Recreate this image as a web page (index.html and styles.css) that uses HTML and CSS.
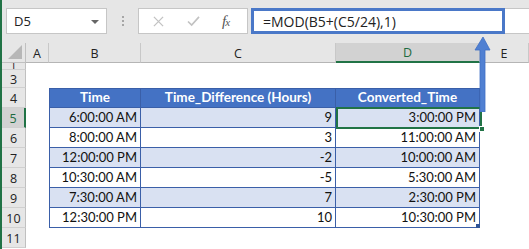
FILE: index.html
```html
<!DOCTYPE html>
<html lang="en">
<head>
  <meta charset="UTF-8">
  <title>MOD time conversion</title>
  <link rel="stylesheet" href="styles.css">
</head>
<body>
  <div class="app">
    <!-- formula bar -->
    <div class="formula-row">
      <div class="name-box">
        <span>D5</span>
        <span class="caret"></span>
      </div>
      <div class="grip"><i></i><i></i><i></i></div>
      <div class="fx-box">
        <svg class="ico" viewBox="0 0 12 12"><path d="M1 1L11 11M11 1L1 11" stroke="#c2c2c2" stroke-width="1.4" fill="none"/></svg>
        <svg class="ico" viewBox="0 0 14 12"><path d="M1 6L5 10L13 1" stroke="#c2c2c2" stroke-width="1.8" fill="none"/></svg>
        <span class="fx">f<small>x</small></span>
      </div>
      <div class="formula-input">=MOD(B5+(C5/24),1)</div>
    </div>

    <!-- grid -->
    <div class="sheet">
      <div class="hd corner"><span class="tri"></span></div>
      <div class="hd col">A</div>
      <div class="hd col">B</div>
      <div class="hd col">C</div>
      <div class="hd col active">D</div>
      <div class="hd col">E</div>

      <div class="hd row r-tiny"><span>1</span></div>
      <div class="blank span5"></div>

      <div class="hd row r-short"><span>3</span></div>
      <div class="blank span5"></div>

      <div class="hd row">4</div>
      <div class="blank"></div>
      <div class="cell th first top">Time</div>
      <div class="cell th top">Time_Difference (Hours)</div>
      <div class="cell th top">Converted_Time</div>
      <div class="blank"></div>

      <div class="hd row active">5</div>
      <div class="blank"></div>
      <div class="cell band first">6:00:00 AM</div>
      <div class="cell band">9</div>
      <div class="cell band">3:00:00 PM</div>
      <div class="blank"></div>

      <div class="hd row">6</div>
      <div class="blank"></div>
      <div class="cell first">8:00:00 AM</div>
      <div class="cell">3</div>
      <div class="cell">11:00:00 AM</div>
      <div class="blank"></div>

      <div class="hd row">7</div>
      <div class="blank"></div>
      <div class="cell band first">12:00:00 PM</div>
      <div class="cell band">-2</div>
      <div class="cell band">10:00:00 AM</div>
      <div class="blank"></div>

      <div class="hd row">8</div>
      <div class="blank"></div>
      <div class="cell first">10:30:00 AM</div>
      <div class="cell">-5</div>
      <div class="cell">5:30:00 AM</div>
      <div class="blank"></div>

      <div class="hd row">9</div>
      <div class="blank"></div>
      <div class="cell band first">7:30:00 AM</div>
      <div class="cell band">7</div>
      <div class="cell band">2:30:00 PM</div>
      <div class="blank"></div>

      <div class="hd row">10</div>
      <div class="blank"></div>
      <div class="cell first">12:30:00 PM</div>
      <div class="cell">10</div>
      <div class="cell last">10:30:00 PM<span class="resize"></span></div>
      <div class="blank"></div>

      <div class="hd row">11</div>
      <div class="blank span5"></div>
    </div>

    <!-- overlays -->
    <div class="callout"></div>
    <div class="selection"><span class="handle"></span></div>
    <svg class="arrow" viewBox="0 0 18 76">
      <path d="M9 1L16 14H11V76H6V14H1Z" fill="#5080d2" stroke="#3f6fc4" stroke-width="0.8"/>
    </svg>
  </div>
</body>
</html>
```

FILE: styles.css
```css
* {
  margin: 0;
  padding: 0;
  box-sizing: border-box;
}

body {
  width: 529px;
  height: 249px;
  overflow: hidden;
  background: #fff;
  font-family: "Open Sans", "Noto Sans", sans-serif;
  color: #222;
}

.app {
  position: relative;
  height: 249px;
  border-left: 2px solid #217346;
}

/* formula bar */

.formula-row {
  display: flex;
  align-items: stretch;
  height: 43px;
  padding: 8px 0 9px 4px;
  background: #e6e6e6;
}

.name-box {
  width: 101px;
  display: flex;
  align-items: center;
  justify-content: space-between;
  padding: 0 7px 0 7px;
  background: #fff;
  border: 1px solid #c6c6c6;
  font-size: 13px;
  color: #222;
}

.caret {
  width: 0;
  height: 0;
  border-left: 4px solid transparent;
  border-right: 4px solid transparent;
  border-top: 4px solid #666;
  margin-top: 1px;
}

.grip {
  width: 31px;
  display: flex;
  flex-direction: column;
  align-items: center;
  justify-content: center;
  gap: 2px;
}

.grip i {
  width: 2px;
  height: 2px;
  background: #a6a6a6;
}

.fx-box {
  width: 110px;
  display: flex;
  align-items: center;
  padding: 0 0 0 14px;
  background: #fff;
  border: 1px solid #c6c6c6;
}

.ico {
  width: 11px;
  height: 11px;
  margin-right: 23px;
}

.ico + .ico {
  width: 13px;
  margin-right: 22px;
}

.fx {
  font-family: "Liberation Serif", serif;
  font-style: italic;
  font-size: 15px;
  color: #555;
  letter-spacing: -1px;
}

.fx small {
  font-size: 11px;
}

.formula-input {
  flex: 1;
  margin-left: 3px;
  display: flex;
  align-items: center;
  padding-left: 11px;
  background: #fff;
  border: 1px solid #c6c6c6;
  border-right: none;
  font-size: 14px;
  color: #222;
  white-space: nowrap;
}

/* sheet */

.sheet {
  display: grid;
  grid-template-columns: 24px 23px 92px 195px 144px 1fr;
  grid-template-rows: 20px 7px 18px repeat(8, 20px);
}

.hd {
  background: #e6e6e6;
  border-right: 1px solid #c0c0c0;
  border-bottom: 1px solid #c0c0c0;
  display: flex;
  align-items: center;
  justify-content: center;
  font-size: 12.5px;
  color: #222;
  overflow: hidden;
}

.hd.col {
  border-right-color: #c8c8c8;
  border-bottom-color: #b5b5b5;
  padding-top: 1px;
}

.hd.col.active {
  background: #d2d2d2;
  border-bottom: 2px solid #217346;
  color: #1d6b40;
}

.corner {
  position: relative;
  background: #e6e6e6;
}

.tri {
  position: absolute;
  right: 3px;
  bottom: 3px;
  width: 0;
  height: 0;
  border-left: 14px solid transparent;
  border-bottom: 14px solid #b7b7b7;
}

.hd.row {
  background: #e6e6e6;
  border-bottom-color: #d0d0d0;
  padding-top: 1px;
}

.hd.row.active {
  background: #d2d2d2;
  border-right: 2px solid #217346;
  color: #1d6b40;
}

.r-tiny {
  align-items: flex-end;
}

.r-tiny span {
  font-size: 11px;
  line-height: 9px;
}

.r-short {
  align-items: flex-end;
}

.r-short span {
  line-height: 14px;
}

.blank {
  background: #fff;
}

.span5 {
  grid-column: span 5;
}

.cell {
  display: flex;
  align-items: flex-end;
  justify-content: flex-end;
  padding: 0 3px 2px 0;
  font-family: "Lato", sans-serif;
  font-size: 13px;
  color: #111;
  background: #fff;
  border-right: 1px solid #3a5fa8;
  border-bottom: 1px solid #3a5fa8;
  white-space: nowrap;
  position: relative;
}

.cell.first {
  border-left: 1px solid #3a5fa8;
}

.cell.top {
  border-top: 1px solid #3a5fa8;
}

.cell.band {
  background: #d9e1f2;
}

.cell.th {
  background: #4472c4;
  color: #fff;
  font-weight: 700;
  font-size: 13.5px;
  justify-content: center;
  padding-right: 0;
}

.resize {
  position: absolute;
  right: -1px;
  bottom: -1px;
  width: 4px;
  height: 4px;
  background: #2f5597;
}

/* overlays */

.callout {
  position: absolute;
  left: 249px;
  top: 8px;
  width: 254px;
  height: 26px;
  border: 3px solid #4a78c8;
}

.selection {
  position: absolute;
  left: 334px;
  top: 107px;
  width: 146px;
  height: 22px;
  border: 2px solid #217346;
}

.handle {
  position: absolute;
  right: -5px;
  bottom: -5px;
  width: 6px;
  height: 6px;
  background: #217346;
  border: 1px solid #fff;
}

.arrow {
  position: absolute;
  left: 472px;
  top: 36px;
  width: 18px;
  height: 76px;
}
```
